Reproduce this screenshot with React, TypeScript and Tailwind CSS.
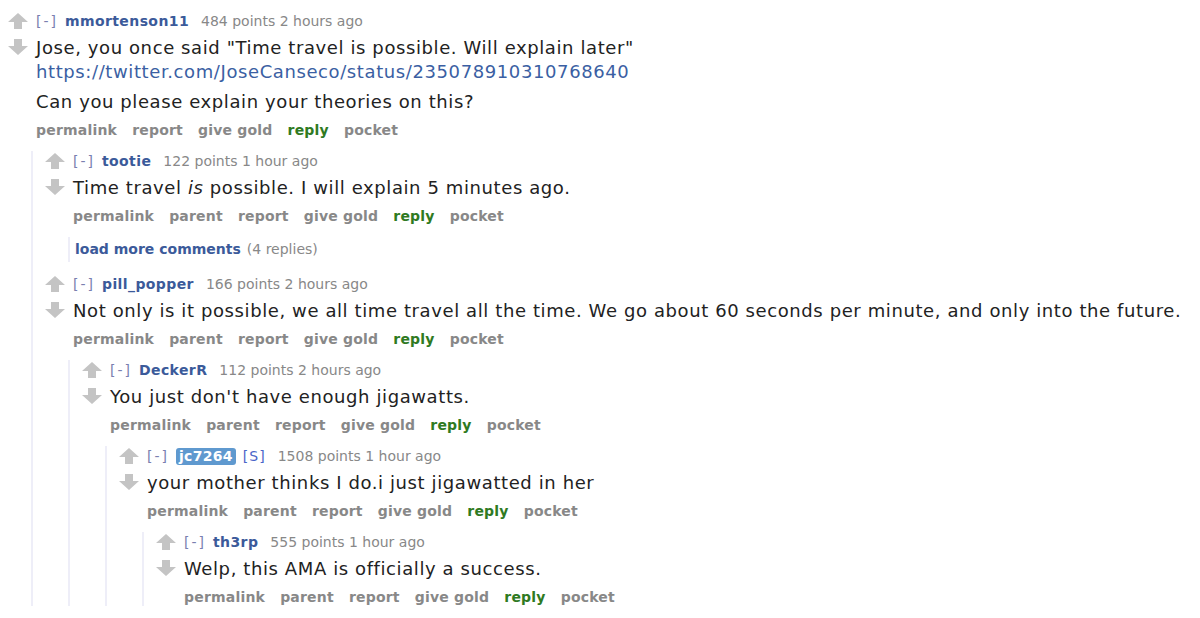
import React from 'react';

type CommentData = {
  author: string;
  points: string;
  time: string;
  body: React.ReactNode;
  highlight?: boolean;
  submitter?: boolean;
  parent?: boolean;
  children?: CommentData[];
  loadMore?: boolean;
};

const font = { fontFamily: '"DejaVu Sans", Verdana, sans-serif' };

const Arrow = ({ down }: { down?: boolean }) => (
  <svg width="20" height="16" viewBox="0 0 20 16" className={down ? 'rotate-180' : ''}>
    <path d="M10 0 L20 9 L14 9 L14 16 L6 16 L6 9 L0 9 Z" fill="#c4c4c4" />
  </svg>
);

const Buttons = ({ parent }: { parent?: boolean }) => (
  <div className="mt-[7px] flex h-[18px] items-center gap-[15px] text-[14px] leading-[18px] font-bold tracking-[0.2px] text-[#888]">
    <span>permalink</span>
    {parent && <span>parent</span>}
    <span>report</span>
    <span>give gold</span>
    <span className="text-[#2f7a22]">reply</span>
    <span>pocket</span>
  </div>
);

const Comment = ({ c }: { c: CommentData }) => (
  <div>
    <div className="flex">
      <div className="flex w-[28px] shrink-0 flex-col pt-[2px]">
        <Arrow />
        <div className="mt-[10px]">
          <Arrow down />
        </div>
      </div>
      <div>
        <div className="flex h-[20px] items-center text-[14px] leading-[20px]">
          <span className="tracking-[2px] text-[#7a7fb0]">[-]</span>
          {c.highlight ? (
            <span className="ml-[7px] rounded-[3px] bg-[#5f99cf] px-[3px] font-bold leading-[17px] tracking-[0.3px] text-white">
              {c.author}
            </span>
          ) : (
            <span className="ml-[7px] font-bold tracking-[0.4px] text-[#3b5a9a]">{c.author}</span>
          )}
          {c.submitter && <span className="ml-[7px] tracking-[1px] text-[#4a66c8]">[S]</span>}
          <span className="ml-[12px] text-[#888]">
            {c.points} points {c.time}
          </span>
        </div>
        <div className="mt-[5px] text-[18px] leading-[24px] tracking-[0.6px] text-[#222]">{c.body}</div>
        <Buttons parent={c.parent} />
      </div>
    </div>
    {c.loadMore && (
      <div className="mt-[12px] ml-[23px] flex h-[25px] items-center border-l-2 border-[#eeeef8] pl-[5px] text-[14px]">
        <span className="font-bold text-[#3b5a9a]">load more comments</span>
        <span className="ml-[6px] text-[#888]">(4 replies)</span>
      </div>
    )}
    {c.children && (
      <div className="ml-[23px] border-l-2 border-[#eeeef8] pl-[12px]">
        {c.children.map((ch, i) => (
          <div key={i} className="mt-[12px]">
            <Comment c={ch} />
          </div>
        ))}
      </div>
    )}
  </div>
);

const thread: CommentData = {
  author: 'mmortenson11',
  points: '484',
  time: '2 hours ago',
  body: (
    <>
      <p>Jose, you once said "Time travel is possible. Will explain later"</p>
      <p className="text-[#3b5fa3]">https://twitter.com/JoseCanseco/status/235078910310768640</p>
      <p className="mt-[6px]">Can you please explain your theories on this?</p>
    </>
  ),
  children: [
    {
      author: 'tootie',
      points: '122',
      time: '1 hour ago',
      parent: true,
      loadMore: true,
      body: (
        <p>
          Time travel <em>is</em> possible. I will explain 5 minutes ago.
        </p>
      ),
    },
    {
      author: 'pill_popper',
      points: '166',
      time: '2 hours ago',
      parent: true,
      body: (
        <p>
          Not only is it possible, we all time travel all the time. We go about 60 seconds per minute, and only into
          the future.
        </p>
      ),
      children: [
        {
          author: 'DeckerR',
          points: '112',
          time: '2 hours ago',
          parent: true,
          body: <p>You just don't have enough jigawatts.</p>,
          children: [
            {
              author: 'jc7264',
              points: '1508',
              time: '1 hour ago',
              parent: true,
              highlight: true,
              submitter: true,
              body: <p>your mother thinks I do.i just jigawatted in her</p>,
              children: [
                {
                  author: 'th3rp',
                  points: '555',
                  time: '1 hour ago',
                  parent: true,
                  body: <p>Welp, this AMA is officially a success.</p>,
                },
              ],
            },
          ],
        },
      ],
    },
  ],
};

export default function App() {
  return (
    <div className="h-[618px] w-[1200px] overflow-hidden bg-white pt-[11px] pl-[8px]" style={font}>
      <Comment c={thread} />
    </div>
  );
}
